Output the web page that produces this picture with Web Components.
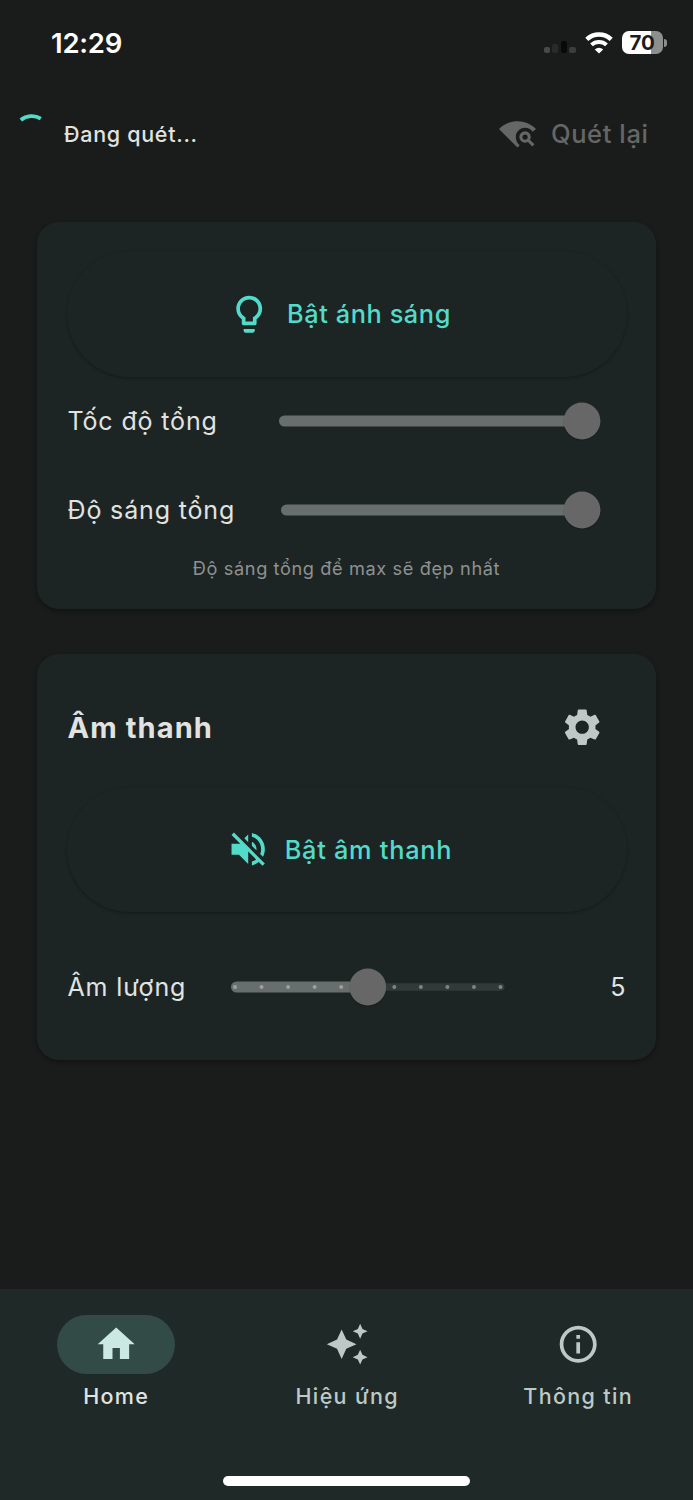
<!DOCTYPE html>
<html lang="vi">
<head>
<meta charset="UTF-8">
<meta name="viewport" content="width=device-width, initial-scale=1.0">
<title>Home</title>
<style>
    body {
        margin: 0;
        background: #1a1c1b;
        color: #e1e3e1;
        font-family: Inter, "Liberation Sans", sans-serif;
    }
</style>
</head>
<body>
<light-app>
    <status-bar slot="top" time="12:29" battery="70"></status-bar>
    <scan-header slot="top" action="Quét lại">Đang quét...</scan-header>

    <panel-card>
        <pill-button icon="bulb" style="--gap: 15.5px; --end: 15px; --ls: 0.6px">Bật ánh sáng</pill-button>
        <slider-row label="Tốc độ tổng" start="211" end="532.5" value="1"></slider-row>
        <slider-row label="Độ sáng tổng" start="213" end="532.5" value="1"></slider-row>
        <hint-text>Độ sáng tổng để max sẽ đẹp nhất</hint-text>
    </panel-card>

    <panel-card>
        <panel-title icon="gear">Âm thanh</panel-title>
        <pill-button icon="mute" style="--gap: 14.5px; --end: 15px; --ls: 0.75px">Bật âm thanh</pill-button>
        <slider-row label="Âm lượng" start="163.5" end="437" value="0.5" steps="10" output="5" style="margin-top: 30px"></slider-row>
    </panel-card>

    <nav-bar slot="bottom">
        <nav-item icon="home" active>Home</nav-item>
        <nav-item icon="sparkle">Hiệu ứng</nav-item>
        <nav-item icon="info">Thông tin</nav-item>
    </nav-bar>
</light-app>

<script>
// 24x24 icons
const ICONS = {
    bulb: '<path d="M9 21c0 .55.45 1 1 1h4c.55 0 1-.45 1-1v-1H9v1zm3-19C8.14 2 5 5.14 5 9c0 2.38 1.19 4.47 3 5.74V17c0 .55.45 1 1 1h6c.55 0 1-.45 1-1v-2.26c1.81-1.27 3-3.36 3-5.74 0-3.86-3.14-7-7-7zm2.85 11.1l-.85.6V16h-4v-2.3l-.85-.6C7.8 12.16 7 10.63 7 9c0-2.76 2.24-5 5-5s5 2.24 5 5c0 1.63-.8 3.16-2.15 4.1z"/>',
    mute: '<path d="M16.5 12c0-1.77-1.02-3.29-2.5-4.03v2.21l2.45 2.45c.03-.2.05-.41.05-.63zm2.5 0c0 .94-.2 1.82-.54 2.64l1.51 1.51C20.63 14.91 21 13.5 21 12c0-4.28-2.99-7.86-7-8.77v2.06c2.89.86 5 3.54 5 6.71zM4.27 3L3 4.27 7.73 9H3v6h4l5 5v-6.73l4.25 4.25c-.67.52-1.42.93-2.25 1.18v2.06c1.38-.31 2.63-.95 3.69-1.81L19.73 21 21 19.73l-9-9L4.27 3zM12 4L9.91 6.09 12 8.18V4z"/>',
    gear: '<path d="M19.14 12.94c.04-.3.06-.61.06-.94 0-.32-.02-.64-.07-.94l2.03-1.58c.18-.14.23-.41.12-.61l-1.92-3.32c-.12-.22-.37-.29-.59-.22l-2.39.96c-.5-.38-1.03-.7-1.62-.94l-.36-2.54c-.04-.24-.24-.41-.48-.41h-3.84c-.24 0-.43.17-.47.41l-.36 2.54c-.59.24-1.13.57-1.62.94l-2.39-.96c-.22-.08-.47 0-.59.22L2.74 8.87c-.12.21-.08.47.12.61l2.03 1.58c-.05.3-.09.63-.09.94s.02.64.07.94l-2.03 1.58c-.18.14-.23.41-.12.61l1.92 3.32c.12.22.37.29.59.22l2.39-.96c.5.38 1.03.7 1.62.94l.36 2.54c.05.24.24.41.48.41h3.84c.24 0 .44-.17.47-.41l.36-2.54c.59-.24 1.13-.56 1.62-.94l2.39.96c.22.08.47 0 .59-.22l1.92-3.32c.12-.22.07-.47-.12-.61l-2.01-1.58zM12 15.6c-1.98 0-3.6-1.62-3.6-3.6s1.62-3.6 3.6-3.6 3.6 1.62 3.6 3.6-1.62 3.6-3.6 3.6z"/>',
    home: '<path d="M10 20v-6h4v6h5v-8h3L12 3 2 12h3v8z"/>',
    sparkle: '<path d="M19 9l1.25-2.75L23 5l-2.75-1.25L19 1l-1.25 2.75L15 5l2.75 1.25L19 9zm-7.5.5L9 4 6.5 9.5 1 12l5.5 2.5L9 20l2.5-5.5L17 12l-5.5-2.5zM19 15l-1.25 2.75L15 19l2.75 1.25L19 23l1.25-2.75L23 19l-2.75-1.25L19 15z"/>',
    info: '<path d="M11 7h2v2h-2zm0 4h2v6h-2zm1-9C6.48 2 2 6.48 2 12s4.48 10 10 10 10-4.48 10-10S17.52 2 12 2zm0 18c-4.41 0-8-3.59-8-8s3.59-8 8-8 8 3.59 8 8-3.59 8-8 8z"/>',
    wifiFind: '<path d="M12 4C7.31 4 3.07 5.9 0 9l12 12 1.4-1.4C11.7 18.3 10.9 16.4 10.9 14.3c0-3.4 2.7-6 6-6 2 0 3.8 1 4.9 2.5L24 9C20.93 5.9 16.69 4 12 4z"/><path fill="none" stroke="currentColor" stroke-width="2" d="M14.2 14.3a2.7 2.7 0 1 0 5.4 0a2.7 2.7 0 1 0-5.4 0M18.8 16.2l3.5 3.5"/>'
}

class AppIcon extends HTMLElement {
    constructor() {
        super()
        this.attachShadow({ mode: 'open' })
    }

    connectedCallback() {
        this.shadowRoot.innerHTML = `
        <style>
            :host {
                display: block;
                flex: none;
                width: var(--icon-size, 44.4px);
                height: var(--icon-size, 44.4px);
            }
            svg { display: block; width: 100%; height: 100%; }
        </style>
        <svg viewBox="0 0 24 24" fill="currentColor">${ICONS[this.getAttribute('name')]}</svg>
        `
    }
}

class LightApp extends HTMLElement {
    constructor() {
        super()
        this.attachShadow({ mode: 'open' })
        this.shadowRoot.innerHTML = `
        <style>
            :host {
                display: flex;
                flex-direction: column;
                height: 1500px;
                overflow: hidden;
            }
            main {
                flex: 1;
                display: flex;
                flex-direction: column;
                gap: 45px;
                padding: 40px 37px 0;
            }
        </style>
        <slot name="top"></slot>
        <main><slot></slot></main>
        <slot name="bottom"></slot>
        `
    }
}

class StatusBar extends HTMLElement {
    constructor() {
        super()
        this.attachShadow({ mode: 'open' })
    }

    connectedCallback() {
        this.shadowRoot.innerHTML = `
        <style>
            :host {
                display: flex;
                align-items: center;
                justify-content: space-between;
                box-sizing: border-box;
                height: 85px;
                margin-bottom: 1px;
                padding: 0 26px 0 51px;
                color: #fff;
            }
            .time { font-size: 27.5px; font-weight: 600; letter-spacing: -0.25px; }
            .right { display: flex; align-items: center; }
            .signal { display: flex; align-items: flex-end; gap: 2.4px; height: 20.5px; margin-right: 9px; }
            .signal i { width: 6.2px; height: 6px; border-radius: 2px; background: #474948; }
            .signal i:nth-child(2) { height: 9px; background: #292b2a; }
            .signal i:nth-child(3) { height: 11.5px; background: #080909; }
            .signal i:nth-child(4) { background: #3b3d3c; }
            .wifi { width: 28px; height: 22px; margin-right: 9px; }
            .battery {
                width: 41px;
                height: 23px;
                border-radius: 7px;
                background: linear-gradient(90deg, #fff 70%, #8d8f8e 70%);
                color: #1a1c1b;
                font-size: 20.5px;
                font-weight: 700;
                line-height: 23px;
                text-align: center;
                letter-spacing: -0.3px;
            }
            .nub { width: 3px; height: 8px; margin-left: 1.5px; border-radius: 0 4px 4px 0; background: #8d8f8e; }
        </style>
        <span class="time">${this.getAttribute('time')}</span>
        <div class="right">
            <div class="signal"><i></i><i></i><i></i><i></i></div>
            <svg class="wifi" viewBox="0 0 28 22" fill="none" stroke="#fff" stroke-width="4.4">
                <path d="M1.8 7.4a17.8 17.8 0 0 1 24.4 0"/>
                <path d="M6.5 12.9a11 11 0 0 1 15 0" stroke-width="3.9"/>
                <path d="M14 21.5l-4.2-4.1a6 6 0 0 1 8.4 0z" fill="#fff" stroke="none"/>
            </svg>
            <div class="battery">${this.getAttribute('battery')}</div>
            <div class="nub"></div>
        </div>
        `
    }
}

class ScanHeader extends HTMLElement {
    constructor() {
        super()
        this.attachShadow({ mode: 'open' })
    }

    connectedCallback() {
        this.shadowRoot.innerHTML = `
        <style>
            :host {
                display: flex;
                align-items: center;
                box-sizing: border-box;
                height: 96px;
                padding: 0 44.5px 0 12px;
            }
            .spinner { width: 38px; height: 38px; margin-right: 14px; overflow: visible; }
            .status { flex: 1; font-size: 21.5px; font-weight: 500; letter-spacing: 0.7px; }
            button {
                all: unset;
                display: flex;
                align-items: center;
                gap: 15px;
                margin-bottom: 2px;
                color: #656766;
                font-size: 25.5px;
                font-weight: 450;
                letter-spacing: 0.6px;
                --icon-size: 37px;
            }
        </style>
        <svg class="spinner" viewBox="0 0 38 38" fill="none" stroke="#53dbc9" stroke-width="3.8">
            <path d="M8.8 5A17.3 17.3 0 0 1 28.8 3.6"/>
        </svg>
        <span class="status"><slot></slot></span>
        <button><app-icon name="wifiFind"></app-icon><span>${this.getAttribute('action')}</span></button>
        `
    }
}

class PanelCard extends HTMLElement {
    constructor() {
        super()
        this.attachShadow({ mode: 'open' })
        this.shadowRoot.innerHTML = `
        <style>
            :host {
                display: flex;
                flex-direction: column;
                padding: 29px 29.5px;
                border-radius: 22px;
                background: #1d2524;
                box-shadow: 0 2px 4px rgba(0, 0, 0, 0.35);
            }
        </style>
        <slot></slot>
        `
    }
}

class PillButton extends HTMLElement {
    constructor() {
        super()
        this.attachShadow({ mode: 'open' })
    }

    connectedCallback() {
        this.shadowRoot.innerHTML = `
        <style>
            :host { display: block; }
            button {
                all: unset;
                display: flex;
                align-items: center;
                justify-content: center;
                gap: var(--gap);
                box-sizing: border-box;
                width: 100%;
                height: 125.5px;
                padding-right: var(--end);
                border-radius: 63px;
                background: #1d2524;
                box-shadow: 0 2px 3px rgba(0, 0, 0, 0.2), 0 0 2px rgba(0, 0, 0, 0.08);
                color: #53dbc9;
                font-size: 25.3px;
                font-weight: 450;
                letter-spacing: var(--ls);
            }
        </style>
        <button><app-icon name="${this.getAttribute('icon')}"></app-icon><slot></slot></button>
        `
    }
}

class PanelTitle extends HTMLElement {
    constructor() {
        super()
        this.attachShadow({ mode: 'open' })
    }

    connectedCallback() {
        this.shadowRoot.innerHTML = `
        <style>
            :host {
                display: flex;
                align-items: center;
                justify-content: space-between;
                height: 89px;
                margin-bottom: 15px;
                padding: 0 22.5px 0 1px;
                font-size: 29px;
                font-weight: 650;
                letter-spacing: 1.1px;
            }
            app-icon { color: #bec9c6; }
        </style>
        <span><slot></slot></span>
        <app-icon name="${this.getAttribute('icon')}"></app-icon>
        `
    }
}

class SliderRow extends HTMLElement {
    constructor() {
        super()
        this.attachShadow({ mode: 'open' })
    }

    connectedCallback() {
        const start = Number(this.getAttribute('start'))
        const end = Number(this.getAttribute('end'))
        const value = Number(this.getAttribute('value'))
        const steps = Number(this.getAttribute('steps') || 0)
        const output = this.getAttribute('output')
        const width = end - start
        // a full slider keeps its thumb inside the track
        const thumb = value === 1 ? width - 18.5 : width * value
        let dots = ''
        for (let i = 0; i <= steps && steps; i++) {
            const x = 4 + (width - 8) * i / steps
            dots += `<circle cx="${x}" cy="20" r="2" fill="${x < thumb ? '#9aa19f' : '#7d8482'}"/>`
        }
        this.shadowRoot.innerHTML = `
        <style>
            :host {
                display: grid;
                grid-template-columns: ${start}px ${width}px 1fr;
                align-items: center;
                height: 88.7px;
                padding: 0 1px;
                font-size: 25px;
            }
            .label { letter-spacing: 0.85px; white-space: nowrap; }
            svg { display: block; overflow: visible; }
            .output { text-align: right; }
        </style>
        <span class="label">${this.getAttribute('label')}</span>
        <svg width="${width}" height="40">
            <rect y="16.3" width="${width}" height="7.4" rx="3.7" fill="#323a39"/>
            <rect y="14.4" width="${thumb}" height="11.2" rx="5.6" fill="#686e6c"/>
            ${dots}
            <circle cx="${thumb}" cy="21.3" r="18.5" fill="#000" opacity="0.18"/>
            <circle cx="${thumb}" cy="20" r="18.4" fill="#666766"/>
        </svg>
        ${output ? `<span class="output">${output}</span>` : ''}
        `
    }
}

class HintText extends HTMLElement {
    constructor() {
        super()
        this.attachShadow({ mode: 'open' })
        this.shadowRoot.innerHTML = `
        <style>
            :host {
                display: block;
                height: 26px;
                line-height: 28px;
                text-align: center;
                color: #8e9190;
                font-size: 18.2px;
                letter-spacing: 0.6px;
            }
        </style>
        <slot></slot>
        `
    }
}

class NavBar extends HTMLElement {
    constructor() {
        super()
        this.attachShadow({ mode: 'open' })
        this.shadowRoot.innerHTML = `
        <style>
            :host {
                display: flex;
                flex-direction: column;
                justify-content: space-between;
                align-items: center;
                box-sizing: border-box;
                height: 211px;
                padding: 26px 0 14.5px;
                background: #1f2a28;
            }
            .items { display: grid; grid-template-columns: repeat(3, 1fr); width: 100%; }
            .indicator { width: 247px; height: 10px; border-radius: 5px; background: #fff; }
        </style>
        <div class="items"><slot></slot></div>
        <div class="indicator"></div>
        `
    }
}

class NavItem extends HTMLElement {
    constructor() {
        super()
        this.attachShadow({ mode: 'open' })
    }

    connectedCallback() {
        this.shadowRoot.innerHTML = `
        <style>
            :host {
                display: flex;
                flex-direction: column;
                align-items: center;
                gap: 8px;
                color: #bec9c6;
                font-size: 21.5px;
                font-weight: 500;
                line-height: 28px;
                letter-spacing: 1.35px;
            }
            .pill {
                display: flex;
                align-items: center;
                justify-content: center;
                box-sizing: border-box;
                width: 118px;
                height: 59px;
                padding-left: 0.5px;
                border-radius: 30px;
            }
            span { padding-left: 1.4px; }
            :host([active]) { color: #e1e3e1; }
            :host([active]) .pill { background: #324b46; color: #cce8e2; }
        </style>
        <div class="pill"><app-icon name="${this.getAttribute('icon')}"></app-icon></div>
        <span><slot></slot></span>
        `
    }
}

customElements.define('app-icon', AppIcon)
customElements.define('light-app', LightApp)
customElements.define('status-bar', StatusBar)
customElements.define('scan-header', ScanHeader)
customElements.define('panel-card', PanelCard)
customElements.define('pill-button', PillButton)
customElements.define('panel-title', PanelTitle)
customElements.define('slider-row', SliderRow)
customElements.define('hint-text', HintText)
customElements.define('nav-bar', NavBar)
customElements.define('nav-item', NavItem)
</script>
</body>
</html>
